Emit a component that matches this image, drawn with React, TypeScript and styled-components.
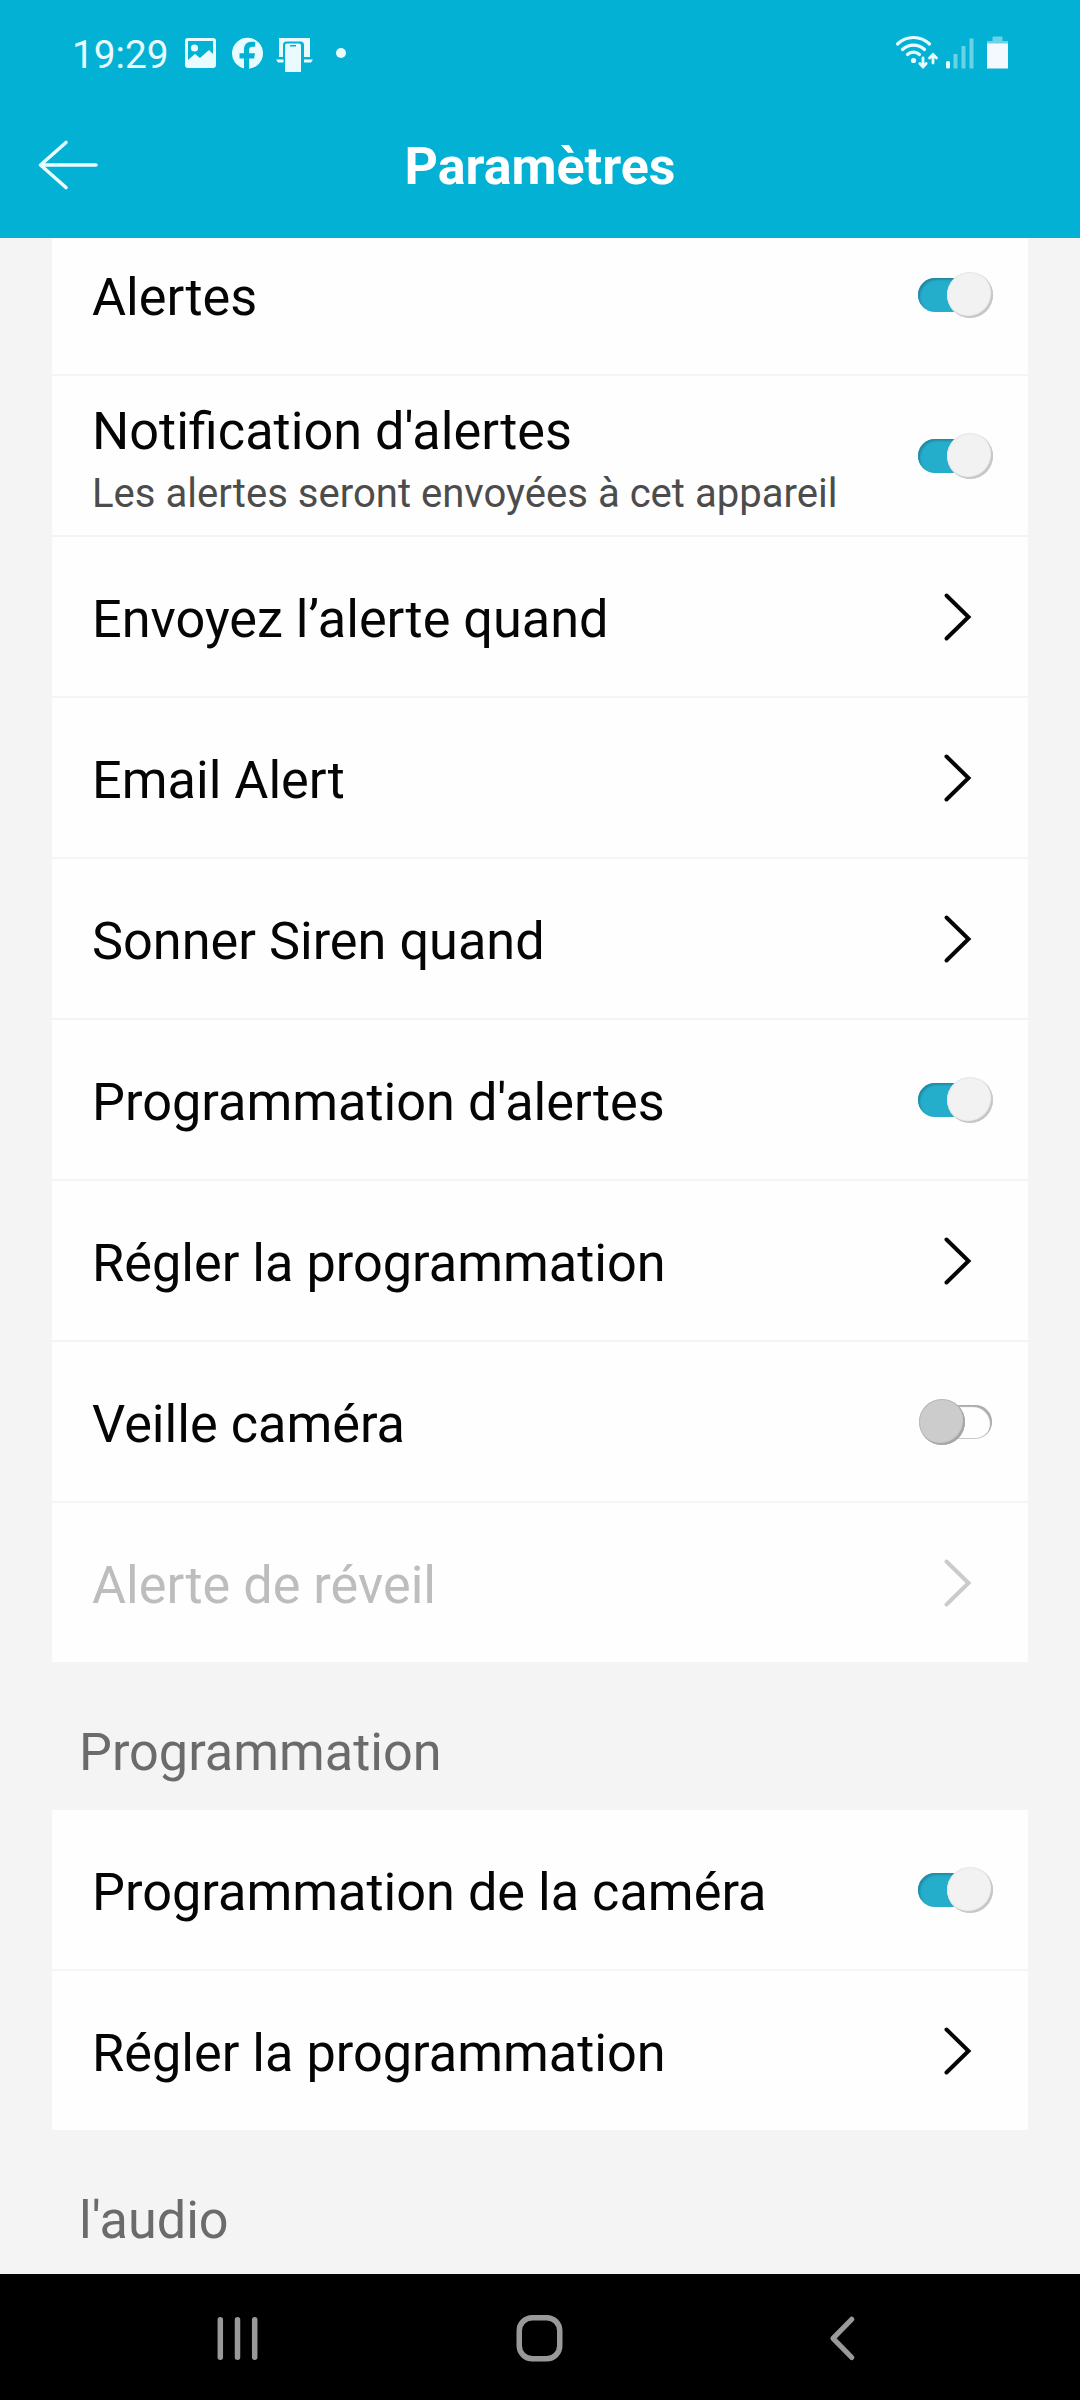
import React from "react";
import styled, { createGlobalStyle } from "styled-components";

const GlobalStyle = createGlobalStyle`
  * { box-sizing: border-box; }
  body { margin: 0; background: #f4f4f4; }
`;

const Screen = styled.div`
  width: 1080px;
  height: 2400px;
  display: flex;
  flex-direction: column;
  overflow: hidden;
  background: #f4f4f4;
  font-family: Roboto, "Liberation Sans", sans-serif;
`;

const StatusBar = styled.div`
  flex: none;
  height: 108px;
  padding: 0 72px 0 72px;
  display: flex;
  align-items: center;
  justify-content: space-between;
  background: #03b1d4;
  color: #e9fbff;
`;

const StatusGroup = styled.div`
  display: flex;
  align-items: center;
`;

const Clock = styled.span`
  width: 112px;
  font-size: 38.8px;
  line-height: 44px;
  padding-top: 2px;
  white-space: nowrap;
`;

const AppBar = styled.header`
  flex: none;
  height: 130px;
  padding: 0 36px;
  display: grid;
  grid-template-columns: 66px 1fr 66px;
  align-items: center;
  background: #03b1d4;
  color: #fff;
`;

const BackButton = styled.button`
  display: flex;
  padding: 0;
  border: 0;
  background: none;
  color: #e9fbff;
  margin-bottom: 17px;
`;

const Title = styled.h1`
  margin: 0;
  padding-bottom: 12px;
  font-size: 52px;
  line-height: 60px;
  font-weight: 700;
  text-align: center;
`;

const Content = styled.main`
  flex: 1;
  min-height: 0;
  overflow: hidden;
  padding: 0 52px;
`;

const Card = styled.section<{ $scrolled?: boolean }>`
  margin-top: ${(p) => (p.$scrolled ? "-23px" : "0")};
  background: #fefefe;
`;

const Row = styled.div<{ $disabled?: boolean }>`
  height: 161px;
  padding: 0 35px 0 40px;
  display: flex;
  align-items: center;
  justify-content: space-between;
  border-bottom: 2px solid #f4f4f4;
  color: ${(p) => (p.$disabled ? "#bdbdbd" : "#050505")};
  &:last-child {
    height: 159px;
    border-bottom: 0;
  }
`;

const Labels = styled.div<{ $double: boolean }>`
  display: flex;
  flex-direction: column;
  padding-top: ${(p) => (p.$double ? 12 : 7)}px;
`;

const Label = styled.span`
  font-size: 52.25px;
  line-height: 60px;
  white-space: nowrap;
`;

const Hint = styled.span`
  margin-top: 4px;
  font-size: 40.1px;
  line-height: 56px;
  color: #4c4c4c;
  white-space: nowrap;
`;

const SectionTitle = styled.h2`
  margin: 0;
  height: 148px;
  padding: 61px 0 0 27px;
  font-size: 52.2px;
  line-height: 60px;
  font-weight: 400;
  color: #6b6b6b;
`;

const Track = styled.span<{ $on: boolean }>`
  flex: none;
  width: ${(p) => (p.$on ? 75 : 73)}px;
  margin-right: ${(p) => (p.$on ? 0 : 1)}px;
  height: 34px;
  display: flex;
  align-items: center;
  justify-content: ${(p) => (p.$on ? "flex-end" : "flex-start")};
  border-radius: 17px;
  background: ${(p) => (p.$on ? "#24aecb" : "#fefefe")};
  box-shadow: ${(p) =>
    p.$on ? "inset 2px 2px 2px #238ba6" : "inset -2px 2px 1px #adadad, inset 0 0 0 1px #c9c9c9"};
`;

const Knob = styled.span<{ $on: boolean }>`
  width: 46px;
  height: 46px;
  flex: none;
  border-radius: 50%;
  background: ${(p) => (p.$on ? "#f2f2f2" : "#cccccc")};
  box-shadow: ${(p) =>
    p.$on ? "inset -2px -2px 1px #c6c6c6, inset 0 0 1px 1px #e6e6e6" : "inset -2px -2px 1px #a6a6a6, inset 0 0 0 1px #bababa"};
`;

const ChevronBox = styled.span<{ $disabled?: boolean }>`
  display: flex;
  margin-right: 20px;
  color: ${(p) => (p.$disabled ? "#cbcbcb" : "#050505")};
`;

const NavBar = styled.nav`
  flex: none;
  height: 126px;
  padding: 2px 0 0;
  display: flex;
  align-items: center;
  justify-content: center;
  gap: 252px;
  background: #000;
  color: #999;
`;

const NavButton = styled.span`
  width: 50px;
  display: flex;
  justify-content: center;
`;

function Toggle({ on }: { on: boolean }) {
  return (
    <Track $on={on}>
      <Knob $on={on} />
    </Track>
  );
}

function Chevron({ disabled }: { disabled?: boolean }) {
  return (
    <ChevronBox $disabled={disabled}>
      <svg width="30" height="50" viewBox="0 0 30 50" fill="none" stroke="currentColor" strokeWidth="4" strokeLinecap="round">
        <path d="M3.500 3.500 L25.500 25 L3.500 46.500" />
      </svg>
    </ChevronBox>
  );
}

interface Item {
  label: string;
  hint?: string;
  toggle?: boolean;
  disabled?: boolean;
}

const alertItems: Item[] = [
  { label: "Alertes", toggle: true },
  { label: "Notification d'alertes", hint: "Les alertes seront envoyées à cet appareil", toggle: true },
  { label: "Envoyez l’alerte quand" },
  { label: "Email Alert" },
  { label: "Sonner Siren quand" },
  { label: "Programmation d'alertes", toggle: true },
  { label: "Régler la programmation" },
  { label: "Veille caméra", toggle: false },
  { label: "Alerte de réveil", disabled: true },
];

const scheduleItems: Item[] = [
  { label: "Programmation de la caméra", toggle: true },
  { label: "Régler la programmation" },
];

function Rows({ items }: { items: Item[] }) {
  return (
    <>
      {items.map((item) => (
        <Row key={item.label} $disabled={item.disabled}>
          <Labels $double={Boolean(item.hint)}>
            <Label>{item.label}</Label>
            {item.hint && <Hint>{item.hint}</Hint>}
          </Labels>
          {item.toggle === undefined ? <Chevron disabled={item.disabled} /> : <Toggle on={item.toggle} />}
        </Row>
      ))}
    </>
  );
}

function NotificationIcons() {
  return (
    <svg width="164" height="40" viewBox="184 34 164 40" fill="currentColor">
      <path
        fillRule="evenodd"
        d="M188 38h25a3 3 0 0 1 3 3v24a3 3 0 0 1-3 3h-25a3 3 0 0 1-3-3V41a3 3 0 0 1 3-3zM188 41v19l7-6 5 4 9-8 4 4V41z"
      />
      <circle cx="194.500" cy="48" r="3.600" />
      <path d="M263 53.300a15.500 15.500 0 1 0-19 15.100V58.500h-4.500v-5.200h4.500v-3.200c0-5.500 2.800-8.300 7.600-8.300 1.400 0 2.600.1 3.600.3v4.700h-2.600c-2.700 0-3.500 1.300-3.500 3.400v3.100h5.900l-.9 5.200h-5v10.200A15.500 15.500 0 0 0 263 53.300z" />
      <path d="M279 38h31v19h-6V45a3.500 3.500 0 0 0-3.500-3.500h-14A3.500 3.500 0 0 0 283 45v12h-4z" />
      <path d="M276 59.500h7.500v3h-5.500zM304 59.500h9l-2 3h-7z" />
      <path fillRule="evenodd" d="M287 43.500h12a2 2 0 0 1 2 2V72h-16V45.500a2 2 0 0 1 2-2zM290 45v1.600h6V45z" />
      <circle cx="341" cy="53" r="5" />
    </svg>
  );
}

function SystemIcons() {
  return (
    <svg width="114" height="40" viewBox="894 34 114 40" fill="none" stroke="currentColor" strokeLinecap="round">
      <g strokeWidth="3.200">
        <path d="M897.500 44a23 23 0 0 1 32 0" />
        <path d="M902.500 49.500a16 16 0 0 1 22 0" />
        <path d="M907.500 54.500a9 9 0 0 1 12 0" />
      </g>
      <circle cx="913.500" cy="60.500" r="2.600" fill="currentColor" stroke="none" />
      <g strokeWidth="2.800">
        <path d="M923 58v8M919.800 63.500l3.200 3.500 3.200-3.500" />
        <path d="M933 63v-8M929.500 58l3.500-3.500 3.500 3.500" />
      </g>
      <g stroke="none" fill="currentColor">
        <rect x="946" y="61" width="4" height="7.500" rx="1.500" />
        <g opacity=".45">
          <rect x="953.500" y="54" width="4" height="14.500" />
          <rect x="961.500" y="46" width="4" height="22.500" />
          <rect x="969.500" y="38.500" width="4" height="30" />
          <rect x="992.500" y="36.500" width="10" height="5" rx="1" />
          <rect x="987" y="41" width="21" height="3" />
        </g>
        <rect x="987" y="43.500" width="21" height="25" fill="#f3f9ff" />
      </g>
    </svg>
  );
}

export default function App() {
  return (
    <Screen>
      <GlobalStyle />
      <StatusBar>
        <StatusGroup>
          <Clock>19:29</Clock>
          <NotificationIcons />
        </StatusGroup>
        <SystemIcons />
      </StatusBar>
      <AppBar>
        <BackButton aria-label="Retour">
          <svg width="66" height="54" viewBox="36 137.500 66 54" fill="none" stroke="currentColor" strokeWidth="3.600" strokeLinecap="round" strokeLinejoin="round">
            <path d="M66 142 L40.500 164.500 L66 187 M41 164.500H96" />
          </svg>
        </BackButton>
        <Title>Paramètres</Title>
      </AppBar>
      <Content>
        <Card $scrolled>
          <Rows items={alertItems} />
        </Card>
        <SectionTitle>Programmation</SectionTitle>
        <Card>
          <Rows items={scheduleItems} />
        </Card>
        <SectionTitle>l'audio</SectionTitle>
      </Content>
      <NavBar>
        <NavButton>
          <svg width="50" height="50" viewBox="0 0 50 50" stroke="currentColor" strokeWidth="5.500" strokeLinecap="round">
            <path d="M7.300 6.800v37.500M24.500 6.800v37.500M41.700 6.800v37.500" />
          </svg>
        </NavButton>
        <NavButton>
          <svg width="50" height="50" viewBox="0 0 50 50" fill="none" stroke="currentColor" strokeWidth="5.500">
            <rect x="4.250" y="4.750" width="40.500" height="41" rx="13" />
          </svg>
        </NavButton>
        <NavButton>
          <svg width="50" height="50" viewBox="0 0 50 50" fill="none" stroke="currentColor" strokeWidth="5.200" strokeLinecap="round" strokeLinejoin="round">
            <path d="M34.800 6.300 L16 25.400 L34.800 44.500" />
          </svg>
        </NavButton>
      </NavBar>
    </Screen>
  );
}
